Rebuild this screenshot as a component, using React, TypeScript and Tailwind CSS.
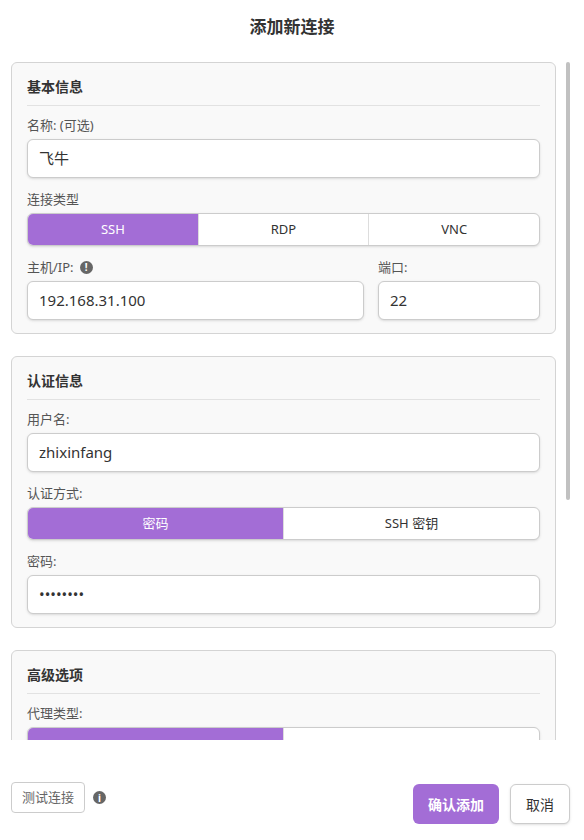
const font = { fontFamily: '"Noto Sans", "Noto Sans CJK SC", sans-serif' }

function Card({ title, children }: { title: string; children: React.ReactNode }) {
  return (
    <div className="bg-[#f9f9f9] border border-[#d4d4d4] rounded-md px-[15px] pt-[14px] pb-[13px]">
      <h3 className="text-[14px] font-bold text-[#333] pb-[8px] border-b border-[#e2e2e2] leading-[20px]">{title}</h3>
      <div className="mt-[10px] space-y-[12px]">{children}</div>
    </div>
  )
}

function Label({ children }: { children: React.ReactNode }) {
  return <div className="text-[13px] text-[#555] leading-[18px] mb-[5px] flex items-center gap-[6px]">{children}</div>
}

function Input({ value }: { value: string }) {
  return (
    <div className="h-[39px] bg-white border border-[#ccc] rounded-md shadow-sm px-[11px] flex items-center text-[15px] text-[#333]">
      {value}
    </div>
  )
}

function Segmented({ items, active }: { items: string[]; active: number }) {
  return (
    <div className="h-[33px] flex border border-[#ccc] rounded-md overflow-hidden bg-white shadow-sm">
      {items.map((it, i) => (
        <div
          key={i}
          className={
            'flex-1 flex items-center justify-center text-[13px] ' +
            (i === active ? 'bg-[#a36dd6] text-white' : 'text-[#333]') +
            (i > 0 ? ' border-l border-[#ddd]' : '')
          }
        >
          {it}
        </div>
      ))}
    </div>
  )
}

function InfoDot({ glyph }: { glyph: string }) {
  return (
    <span className="inline-flex w-[13px] h-[13px] rounded-full bg-[#666] text-white text-[10px] font-bold items-center justify-center leading-none">
      {glyph}
    </span>
  )
}

export default function App() {
  return (
    <div className="w-[584px] h-[840px] bg-white relative overflow-hidden" style={font}>
      <h1 className="text-center text-[17px] font-bold text-[#333] pt-[14px] h-[50px]">添加新连接</h1>
      <div className="h-[690px] overflow-hidden pl-[11px] pr-[28px] pt-[12px] space-y-[22px]">
        <Card title="基本信息">
          <div>
            <Label>名称: (可选)</Label>
            <Input value="飞牛" />
          </div>
          <div>
            <Label>连接类型</Label>
            <Segmented items={['SSH', 'RDP', 'VNC']} active={0} />
          </div>
          <div className="flex gap-[14px]">
            <div className="flex-1">
              <Label>主机/IP: <InfoDot glyph="!" /></Label>
              <Input value="192.168.31.100" />
            </div>
            <div className="w-[162px]">
              <Label>端口:</Label>
              <Input value="22" />
            </div>
          </div>
        </Card>
        <Card title="认证信息">
          <div>
            <Label>用户名:</Label>
            <Input value="zhixinfang" />
          </div>
          <div>
            <Label>认证方式:</Label>
            <Segmented items={['密码', 'SSH 密钥']} active={0} />
          </div>
          <div>
            <Label>密码:</Label>
            <Input value="••••••••" />
          </div>
        </Card>
        <Card title="高级选项">
          <div>
            <Label>代理类型:</Label>
            <Segmented items={['', '']} active={0} />
          </div>
        </Card>
      </div>
      <div className="absolute left-[566px] top-[62px] w-[4px] h-[438px] bg-[#c1c1c1] rounded" />
      <div className="flex items-start justify-between px-[11px] pr-[14px] pt-[41px]">
        <div className="flex items-center gap-[8px] mt-[1px]">
          <button className="h-[31px] px-[10px] border border-[#ccc] rounded text-[13px] text-[#666] bg-white">测试连接</button>
          <InfoDot glyph="i" />
        </div>
        <div className="flex gap-[11px] mt-[3px]">
          <button className="h-[40px] w-[86px] bg-[#a36dd6] text-white text-[14px] font-bold rounded-md">确认添加</button>
          <button className="h-[40px] w-[60px] bg-white border border-[#ccc] text-[#333] text-[14px] rounded-md shadow-sm">取消</button>
        </div>
      </div>
    </div>
  )
}
